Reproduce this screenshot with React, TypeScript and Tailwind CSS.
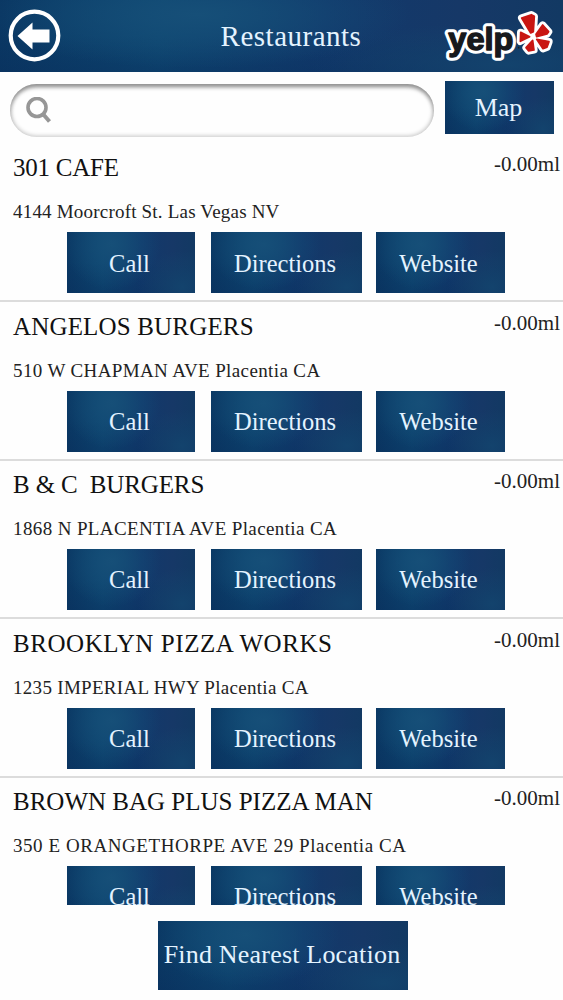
import clsx from "clsx";

const restaurants = [
  {
    name: "301 CAFE",
    address: "4144 Moorcroft St. Las Vegas NV",
    nameClass: "tracking-[-0.25px]",
    addressClass: "tracking-[0.2px]",
  },
  {
    name: "ANGELOS BURGERS",
    address: "510 W CHAPMAN AVE Placentia CA",
    nameClass: "tracking-[0.17px]",
    addressClass: "tracking-[0.38px]",
  },
  {
    name: "B & C  BURGERS",
    address: "1868 N PLACENTIA AVE Placentia CA",
    nameClass: "tracking-[-0.14px]",
    addressClass: "tracking-[0.38px]",
  },
  {
    name: "BROOKLYN PIZZA WORKS",
    address: "1235 IMPERIAL HWY Placentia CA",
    nameClass: "tracking-[0.57px]",
    addressClass: "tracking-[0.3px]",
  },
  {
    name: "BROWN BAG PLUS PIZZA MAN",
    address: "350 E ORANGETHORPE AVE 29 Placentia CA",
    nameClass: "",
    addressClass: "tracking-[0.56px]",
  },
];

const blueSurface =
  "bg-[radial-gradient(ellipse_38%_75%_at_35%_20%,#164f78_0%,transparent_100%),radial-gradient(ellipse_35%_60%_at_90%_90%,#13436d_0%,transparent_100%),linear-gradient(to_bottom,transparent_50%,#092d5b60_100%),linear-gradient(to_right,#0a3763_0%,#0d4671_28%,#11396c_58%,#163867_82%,#123963_100%)]";

const BackButton = () => (
  <button aria-label="Back" className="block size-[53px]">
    <svg viewBox="0 0 53 53" className="size-full">
      <circle cx="26.5" cy="26.5" r="23.8" fill="none" stroke="#fff" strokeWidth="4.2" />
      <path d="M9.5 27 24.5 13.5v7H41.5v13H24.5v7Z" fill="#fff" />
    </svg>
  </button>
);

const burst =
  "M245 39 274 29 283 34 280 80 272 84ZM288 88 308 60 326 80 321 87 290 95ZM290 103 327 110 321 127 309 131ZM258 128 278 106 282 135 266 138ZM242 82 269 95 241 109Z";

const YelpLogo = () => (
  <svg viewBox="0 0 360 180" className="h-[60px] w-[120px]">
    <path d={burst} fill="#fff" stroke="#fff" strokeWidth="22" strokeLinejoin="round" />
    <g
      transform="translate(25 136) scale(1.05 1)"
      fontSize="93"
      fontWeight="700"
      strokeLinejoin="round"
      className="font-['Liberation_Sans',sans-serif]"
    >
      <text fill="#fff" stroke="#fff" strokeWidth="22" aria-hidden="true">
        yelp
      </text>
      <text fill="#17191c" stroke="#17191c" strokeWidth="4">
        yelp
      </text>
    </g>
    <circle cx="236" cy="128" r="2.5" fill="#222" />
    <path d={burst} fill="#c91612" stroke="#c91612" strokeWidth="5" strokeLinejoin="round" />
  </svg>
);

const SearchField = () => (
  <label className="flex h-[53px] w-[424px] items-center rounded-full bg-[#fefefe] pl-[16px] shadow-[inset_0_4px_4px_-1px_#8f8f8f,inset_0_0_4px_1px_#c4c4c4]">
    <svg viewBox="0 0 26 28" className="h-7 w-[26px]" fill="none" stroke="#969696">
      <circle cx="11" cy="10.5" r="9" strokeWidth="3.6" />
      <path d="m17 17 6.5 7.5" strokeWidth="4" />
    </svg>
    <input type="search" aria-label="Search" className="min-w-0 flex-1 bg-transparent outline-none" />
  </label>
);

const BlueButton = ({ label, className }: { label: string; className: string }) => (
  <button
    className={clsx("shrink-0 whitespace-nowrap text-center text-[#e4f3ff]", blueSurface, className)}
  >
    {label}
  </button>
);

const RestaurantRow = ({ name, address, nameClass, addressClass }: (typeof restaurants)[number]) => (
  <li className="h-[158.4px] shrink-0 border-b-2 border-[#dcdcdc] pt-[6.4px]">
    <div className="flex h-9 justify-between pr-[3px] pl-[13px]">
      <h2 className={clsx("whitespace-pre text-[25px] leading-9 text-[#111]", nameClass)}>{name}</h2>
      <span className="text-[21px] leading-[28px] text-[#222]">-0.00ml</span>
    </div>
    <p
      className={clsx(
        "mt-[11px] h-[28px] whitespace-nowrap pl-[13px] text-[19px] leading-[30px] text-[#222]",
        addressClass
      )}
    >
      {address}
    </p>
    <div className="mt-[7.1px] flex pl-[67px]">
      <BlueButton label="Call" className="h-[61px] w-[128px] pt-[2px] pr-[3px] text-[24.5px]" />
      <BlueButton label="Directions" className="ml-4 h-[61px] w-[151px] pt-[2px] pr-[3px] text-[24.5px]" />
      <BlueButton label="Website" className="ml-3.5 h-[61px] w-[129px] pt-[2px] pr-[4px] text-[24.5px]" />
    </div>
  </li>
);

export default function App() {
  return (
    <main className="flex h-[1000px] w-[563px] flex-col overflow-hidden bg-[#fefefe] font-['Liberation_Serif',serif]">
      <header className={clsx("grid h-[72px] shrink-0 grid-cols-[1fr_auto_1fr] items-center", blueSurface)}>
        <div className="pb-[2px] pl-2">
          <BackButton />
        </div>
        <h1 className="pt-[2px] pl-[19px] text-[29px] tracking-[0.5px] text-[#e4f3ff]">Restaurants</h1>
        <div className="flex justify-end pr-[3px] pb-[2px]">
          <YelpLogo />
        </div>
      </header>
      <div className="flex h-[72px] shrink-0 items-start pt-[9px] pl-[10px]">
        <div className="pt-[3px]">
          <SearchField />
        </div>
        <BlueButton label="Map" className="ml-[11px] h-[53px] w-[109px] text-[26px] pr-[2px]" />
      </div>
      <ul className="flex h-[761px] shrink-0 flex-col overflow-hidden">
        {restaurants.map((restaurant) => (
          <RestaurantRow key={restaurant.name} {...restaurant} />
        ))}
      </ul>
      <footer className="flex justify-center pt-4 pl-[3px]">
        <BlueButton
          label="Find Nearest Location"
          className="h-[69px] w-[250px] pr-[2px] pb-[3px] text-[26px] tracking-[0.2px]"
        />
      </footer>
    </main>
  );
}
